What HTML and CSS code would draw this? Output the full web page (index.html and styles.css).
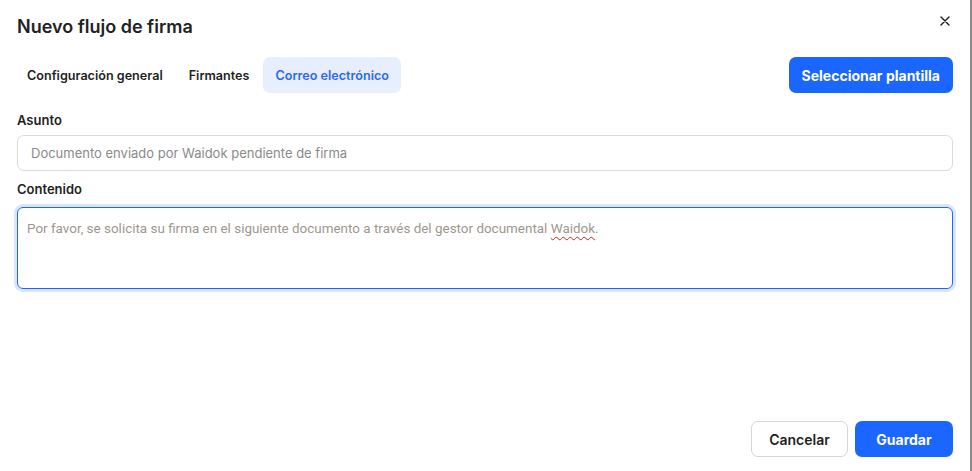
FILE: index.html
```html
<!DOCTYPE html>
<html lang="es">
<head>
<meta charset="utf-8">
<title>Nuevo flujo de firma</title>
<link rel="stylesheet" href="styles.css">
</head>
<body>
<div class="dialog">
  <header class="dialog-header">
    <h1 class="dialog-title">Nuevo flujo de firma</h1>
    <button class="close-btn" aria-label="Cerrar">
      <svg width="10" height="10" viewBox="0 0 10 10"><path d="M1 1L9 9M9 1L1 9" stroke="#1a1a1a" stroke-width="1.4" stroke-linecap="round"/></svg>
    </button>
  </header>

  <div class="toolbar">
    <nav class="tabs">
      <button class="tab">Configuración general</button>
      <button class="tab">Firmantes</button>
      <button class="tab tab-active">Correo electrónico</button>
    </nav>
    <button class="btn btn-primary btn-template">Seleccionar plantilla</button>
  </div>

  <div class="form">
    <div class="field">
      <label class="field-label">Asunto</label>
      <div class="input">Documento enviado por Waidok pendiente de firma</div>
    </div>
    <div class="field">
      <label class="field-label">Contenido</label>
      <div class="textarea">Por favor, se solicita su firma en el siguiente documento a través del gestor documental <span class="misspelled">Waidok</span>.</div>
    </div>
  </div>

  <footer class="dialog-footer">
    <button class="btn btn-secondary">Cancelar</button>
    <button class="btn btn-primary btn-save">Guardar</button>
  </footer>
</div>
</body>
</html>
```

FILE: styles.css
```css
* { box-sizing: border-box; }
html, body { margin: 0; height: 100%; background: #fff; }
body {
  font-family: Inter, "Noto Sans", sans-serif;
  color: #1f1f1f;
}
.dialog {
  width: 972px;
  height: 471px;
  display: flex;
  flex-direction: column;
  padding: 15px 17px 14px 17px;
  border-right: 2px solid #8a8a8a;
  background: #fff;
}
.dialog-header {
  display: flex;
  align-items: center;
  justify-content: space-between;
  height: 24px;
}
.dialog-title {
  margin: 0;
  font-size: 18px;
  line-height: 24px;
  font-weight: 600;
  color: #222;
}
.close-btn {
  border: 0;
  background: none;
  padding: 0;
  width: 12px;
  height: 12px;
  display: flex;
  align-items: center;
  justify-content: center;
  margin-right: 2px;
  margin-top: -12px;
}
.toolbar {
  margin-top: 18px;
  display: flex;
  justify-content: space-between;
  align-items: center;
  height: 36px;
}
.tabs {
  display: flex;
  gap: 2px;
  margin-left: -2px;
}
.tab {
  font-family: Inter, sans-serif;
  font-size: 12.6px;
  font-weight: 600;
  color: #1f1f1f;
  border: 0;
  background: none;
  height: 36px;
  padding: 0 12px;
  border-radius: 7px;
}
.tab-active {
  background: #e7eefd;
  color: #2c69f0;
}
.btn {
  font-family: Inter, sans-serif;
  font-size: 14px;
  font-weight: 700;
  height: 36px;
  border-radius: 7px;
  padding: 0 12px;
  cursor: pointer;
}
.btn-template { padding: 0 13px; }
.btn-primary {
  background: #1a66ff;
  color: #fff;
  border: 0;
}
.form {
  margin-top: 18px;
  display: flex;
  flex-direction: column;
  gap: 9px;
}
.field {
  display: flex;
  flex-direction: column;
}
.field-label {
  font-size: 13px;
  line-height: 18px;
  font-weight: 600;
  color: #1f1f1f;
  margin-bottom: 6px;
}
.input {
  height: 36px;
  border: 1px solid #dcdad6;
  border-radius: 7px;
  padding: 0 13px;
  display: flex;
  align-items: center;
  font-size: 13px;
  color: #8a8a8a;
}
.textarea {
  margin-top: 3px;
  height: 82px;
  border: 1px solid #1a66ff;
  border-radius: 6px;
  box-shadow: 0 0 0 3px #dbe6fd;
  padding: 12px 9px;
  font-family: Roboto, "Liberation Sans", sans-serif;
  font-size: 13.45px;
  line-height: 18px;
  color: #a0978f;
}
.misspelled {
  text-decoration: underline wavy #e02020;
  text-decoration-thickness: 1px;
  text-underline-offset: 3px;
}
.dialog-footer {
  margin-top: auto;
  display: flex;
  justify-content: flex-end;
  gap: 7px;
}
.btn-secondary {
  background: #fff;
  color: #1f1f1f;
  border: 1px solid #d8d6d2;
  font-weight: 600;
  width: 97px;
}
.btn-save {
  width: 98px;
}
```
